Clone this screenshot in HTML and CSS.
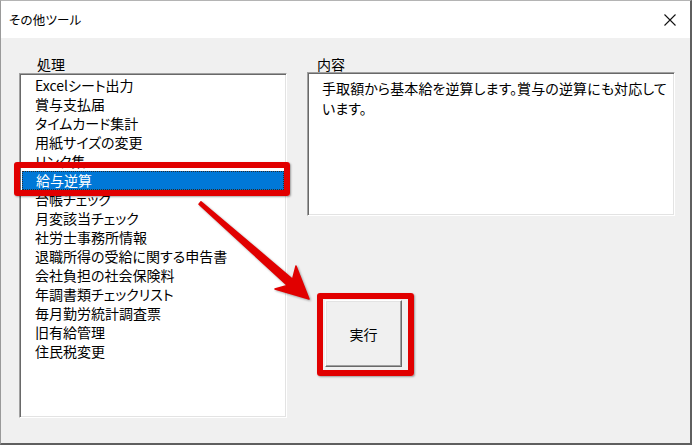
FILE: index.html
```html
<!DOCTYPE html>
<html lang="ja">
<head>
    <meta charset="UTF-8">
    <meta name="viewport" content="width=device-width, initial-scale=1.0">
    <title>その他ツール</title>
    <link rel="stylesheet" href="styles.css">
</head>
<body>
    <div class="window">
        <div class="title-bar">
            <span class="title">その他ツール</span>
            <svg class="close" width="12" height="12" viewBox="0 0 12 12">
                <path d="M0.5 0.5 L11.5 11.5 M11.5 0.5 L0.5 11.5" stroke="#111" stroke-width="1.1" fill="none"/>
            </svg>
        </div>

        <div class="form-body">
            <!-- Left: tool list -->
            <div class="left-col">
                <div class="caption caption-left">処理</div>
                <div class="listbox">
                    <div class="list-item">Excelシート出力</div>
                    <div class="list-item">賞与支払届</div>
                    <div class="list-item">タイムカード集計</div>
                    <div class="list-item">用紙サイズの変更</div>
                    <div class="list-item">リンク集</div>
                    <div class="list-item selected"><span class="focus">給与逆算</span></div>
                    <div class="list-item">台帳チェック</div>
                    <div class="list-item">月変該当チェック</div>
                    <div class="list-item">社労士事務所情報</div>
                    <div class="list-item">退職所得の受給に関する申告書</div>
                    <div class="list-item">会社負担の社会保険料</div>
                    <div class="list-item">年調書類チェックリスト</div>
                    <div class="list-item">毎月勤労統計調査票</div>
                    <div class="list-item">旧有給管理</div>
                    <div class="list-item">住民税変更</div>

                    <div class="highlight-row"></div>
                </div>
            </div>

            <!-- Right: description and run button -->
            <div class="right-col">
                <div class="caption caption-right">内容</div>
                <div class="description">
                    <p>手取額から基本給を逆算します。賞与の逆算にも対応しています。</p>
                </div>
                <div class="run-highlight">
                    <button type="button" class="run-button">実行</button>
                </div>
            </div>
        </div>

        <!-- annotation arrow -->
        <svg class="arrow" width="692" height="445" viewBox="0 0 692 445">
            <polygon points="199,204.3 287.4,285.4 275,289 309,299 296,266 292.6,279.2 201,201.7"
                     fill="#e10000" stroke="#e10000" stroke-width="1.5" stroke-linejoin="round"/>
        </svg>
    </div>
</body>
</html>
```

FILE: styles.css
```css
body {
    margin: 0;
    font-family: "Noto Sans CJK JP", "Noto Sans", sans-serif;
    font-feature-settings: "palt";
    color: #000;
    background-color: #f0f0f0;
}

.window {
    position: relative;
    width: 692px;
    height: 445px;
    box-sizing: border-box;
    background-color: #f0f0f0;
    border-left: 1px solid #9a9a9a;
    border-top: 1px solid #b4b4b4;
    border-right: 2px solid #5f5f5f;
    border-bottom: 2px solid #5f5f5f;
    overflow: hidden;
}

.title-bar {
    height: 37px;
    background-color: #fff;
    display: flex;
    align-items: center;
    justify-content: space-between;
    padding: 0 14px 0 8px;
}

.title {
    font-size: 12.5px;
    letter-spacing: 0.2px;
}

.close {
    margin-top: 1px;
}

.form-body {
    display: flex;
    padding: 17px 0 0 18px;
}

.caption {
    font-size: 14px;
    line-height: 18px;
}

.caption-left {
    padding-left: 18px;
}

.caption-right {
    padding-left: 10px;
}

/* List box */
.listbox {
    position: relative;
    width: 268px;
    height: 345px;
    box-sizing: border-box;
    background-color: #fff;
    border: 1px solid;
    border-color: #a0a0a0 #fff #fff #a0a0a0;
    box-shadow: inset 1px 1px 0 #696969, inset -1px -1px 0 #e3e3e3;
    padding: 2px 2px 0 2px;
}

.list-item {
    height: 19px;
    line-height: 19px;
    font-size: 14px;
    padding-left: 13px;
    white-space: nowrap;
}

.list-item.selected {
    background-color: #0078d7;
    color: #fff;
    padding-left: 0;
}

.focus {
    display: block;
    height: 17px;
    line-height: 17px;
    padding-left: 13px;
    border: 1px dotted #2b2b2b;
}

.highlight-row {
    position: absolute;
    left: -6px;
    top: 88px;
    width: 264px;
    height: 22px;
    border: 6px solid #e10000;
    border-radius: 3px;
    box-shadow: 1px 1px 2px rgba(0, 0, 0, 0.35);
}

/* Description box */
.right-col {
    margin-left: 20px;
}

.description {
    width: 368px;
    height: 144px;
    box-sizing: border-box;
    margin-top: -1px;
    background-color: #fff;
    border: 1px solid;
    border-color: #a0a0a0 #fff #fff #a0a0a0;
    box-shadow: inset 1px 1px 0 #696969, inset -1px -1px 0 #e3e3e3;
    padding: 5px 3px 0 14px;
}

.description p {
    margin: 0;
    font-size: 14px;
    line-height: 20px;
    letter-spacing: 0.1px;
}

/* Run button */
.run-highlight {
    width: 81px;
    height: 69px;
    margin: 77px 0 0 10px;
    border: 6px solid #e10000;
    border-radius: 3px;
    padding: 1px 2px;
    box-shadow: 1px 1px 2px rgba(0, 0, 0, 0.35);
}

.run-button {
    width: 77px;
    height: 67px;
    background-color: #f0f0f0;
    border: 1px solid;
    border-color: #fff #696969 #696969 #fff;
    box-shadow: inset -1px -1px 0 #a0a0a0, inset 1px 1px 0 #e3e3e3;
    font-family: inherit;
    font-feature-settings: "palt";
    font-size: 14px;
    color: #000;
    padding: 0;
}

.arrow {
    position: absolute;
    left: -1px;
    top: -1px;
    filter: drop-shadow(1px 1px 1px rgba(0, 0, 0, 0.35));
}
```
